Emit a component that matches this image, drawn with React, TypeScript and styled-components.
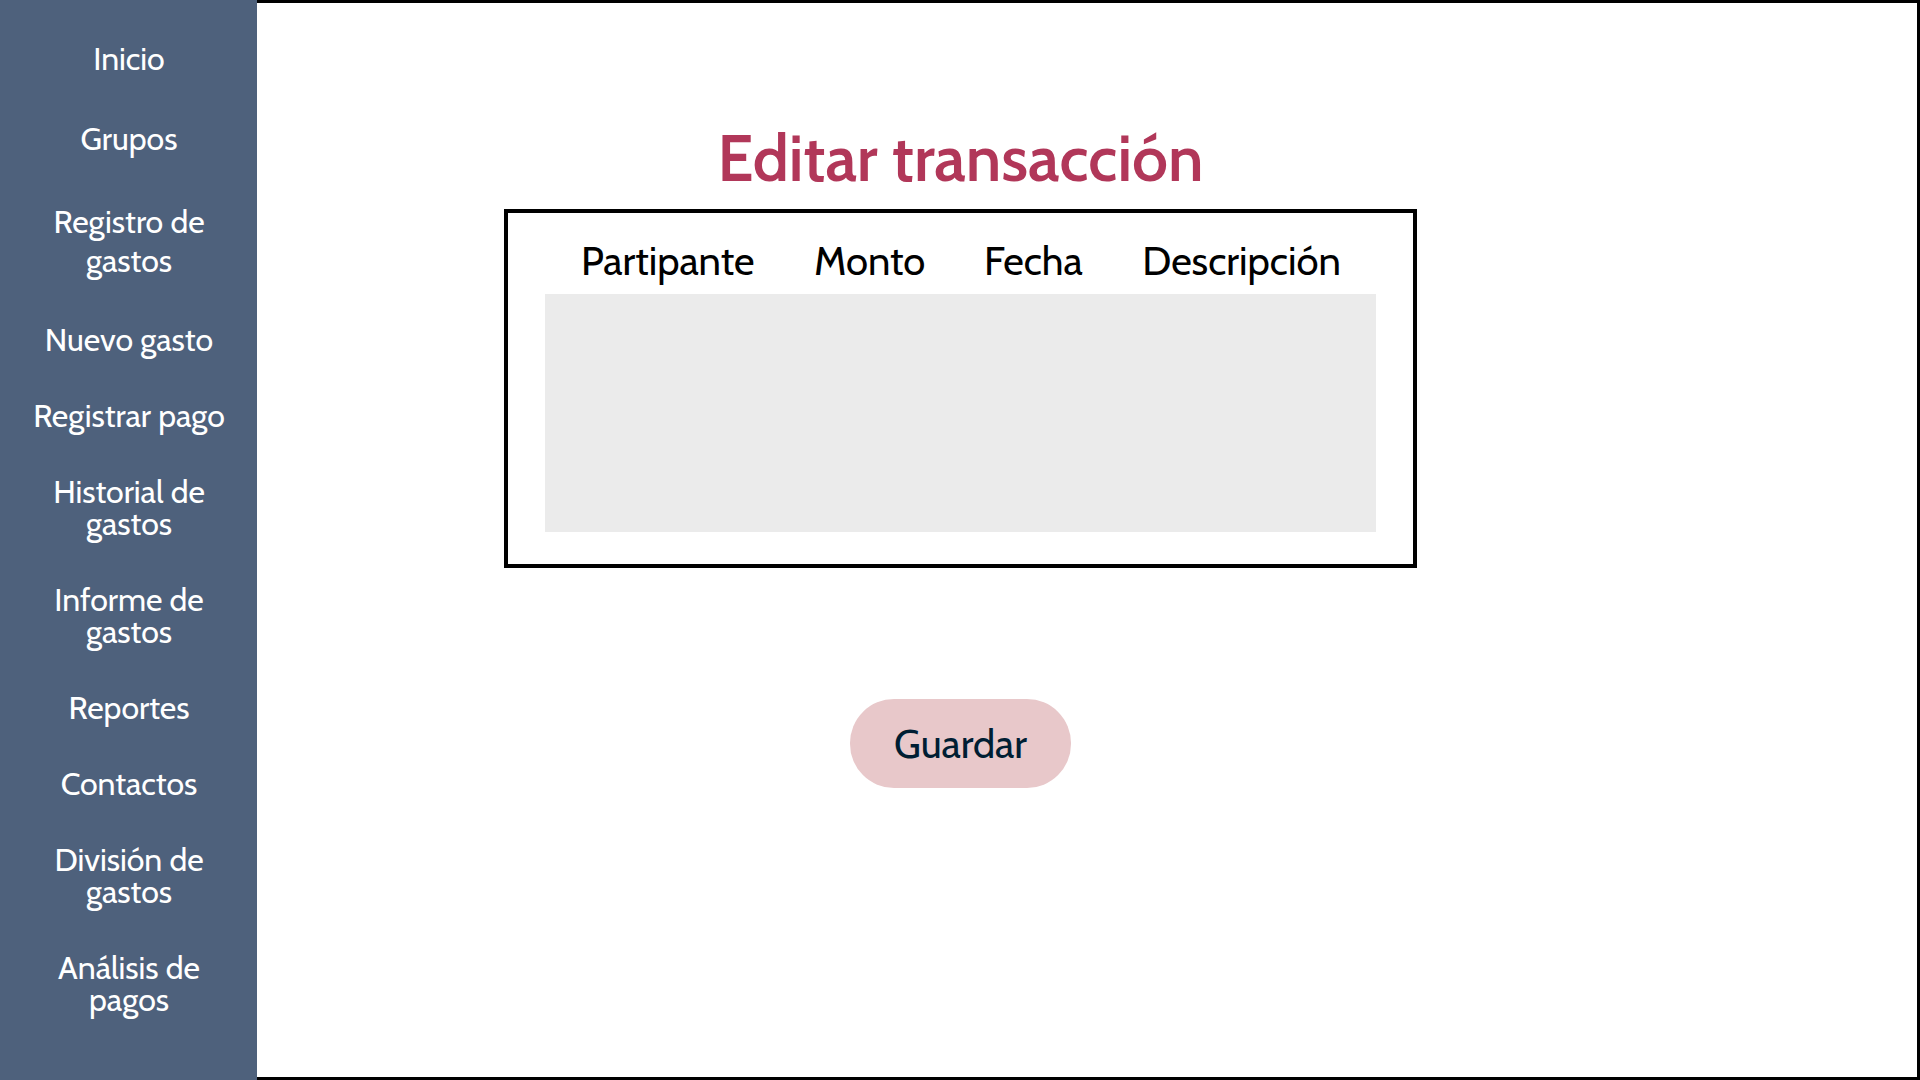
import React from "react";
import styled, { createGlobalStyle } from "styled-components";

const GlobalStyle = createGlobalStyle`
  *, *::before, *::after { box-sizing: border-box; }
  body { margin: 0; background: #ffffff; font-family: Cabin, Lato, sans-serif; }
`;

const Page = styled.div`
  display: flex;
  min-height: 100vh;
`;

const Sidebar = styled.nav`
  flex: none;
  width: 257px;
  padding: 43px 24px 43px 25px;
  background: #4e617c;
`;

const Menu = styled.ul`
  display: flex;
  flex-direction: column;
  gap: 44px;
  margin: 0;
  padding: 0;
  list-style: none;
`;

const MenuLink = styled.a<{ $loose?: boolean }>`
  display: block;
  color: #ffffff;
  font-size: 32px;
  line-height: ${({ $loose }) => ($loose ? 39 : 32)}px;
  text-align: center;
  text-decoration: none;
`;

const Main = styled.main`
  flex: 1;
  display: flex;
  flex-direction: column;
  align-items: center;
  padding: 116px 253px 0 0;
  border: 3px solid #000000;
  border-left: 0;
`;

const Title = styled.h1`
  margin: 0 0 12px;
  color: #b13759;
  font-size: 64px;
  font-weight: 600;
  line-height: 78px;
`;

const Panel = styled.section`
  width: 100%;
  max-width: 913px;
  padding: 23px 37px 32px;
  border: 4px solid #000000;
`;

const Table = styled.table`
  width: 100%;
  border-collapse: collapse;
`;

const HeaderCell = styled.th`
  padding: 0 28px 9px;
  color: #000000;
  font-size: 40px;
  font-weight: 400;
  line-height: 49px;
  text-align: center;
  &:first-child { padding-left: 34px; }
  &:last-child { padding-right: 33px; }
`;

const EmptyCell = styled.td`
  height: 238px;
  padding: 0;
  background: #ebebeb;
`;

const SaveButton = styled.button`
  margin-top: 131px;
  padding: 20px 44px;
  border: 0;
  border-radius: 44px;
  background: #e8c8ca;
  color: #001e33;
  font: inherit;
  font-size: 40px;
  line-height: 49px;
  cursor: pointer;
`;

const links: { label: string; loose?: boolean }[] = [
  { label: "Inicio" },
  { label: "Grupos", loose: true },
  { label: "Registro de gastos", loose: true },
  { label: "Nuevo gasto" },
  { label: "Registrar pago" },
  { label: "Historial de gastos" },
  { label: "Informe de gastos" },
  { label: "Reportes" },
  { label: "Contactos" },
  { label: "División de gastos" },
  { label: "Análisis de pagos" },
];

const columns = ["Partipante", "Monto", "Fecha", "Descripción"];

export default function App() {
  return (
    <Page>
      <GlobalStyle />
      <Sidebar>
        <Menu>
          {links.map(({ label, loose }) => (
            <li key={label}>
              <MenuLink href="#" $loose={loose}>{label}</MenuLink>
            </li>
          ))}
        </Menu>
      </Sidebar>
      <Main>
        <Title>Editar transacción</Title>
        <Panel>
          <Table>
            <thead>
              <tr>
                {columns.map((column) => (
                  <HeaderCell key={column} scope="col">{column}</HeaderCell>
                ))}
              </tr>
            </thead>
            <tbody>
              <tr>
                <EmptyCell colSpan={columns.length} />
              </tr>
            </tbody>
          </Table>
        </Panel>
        <SaveButton type="button">Guardar</SaveButton>
      </Main>
    </Page>
  );
}
